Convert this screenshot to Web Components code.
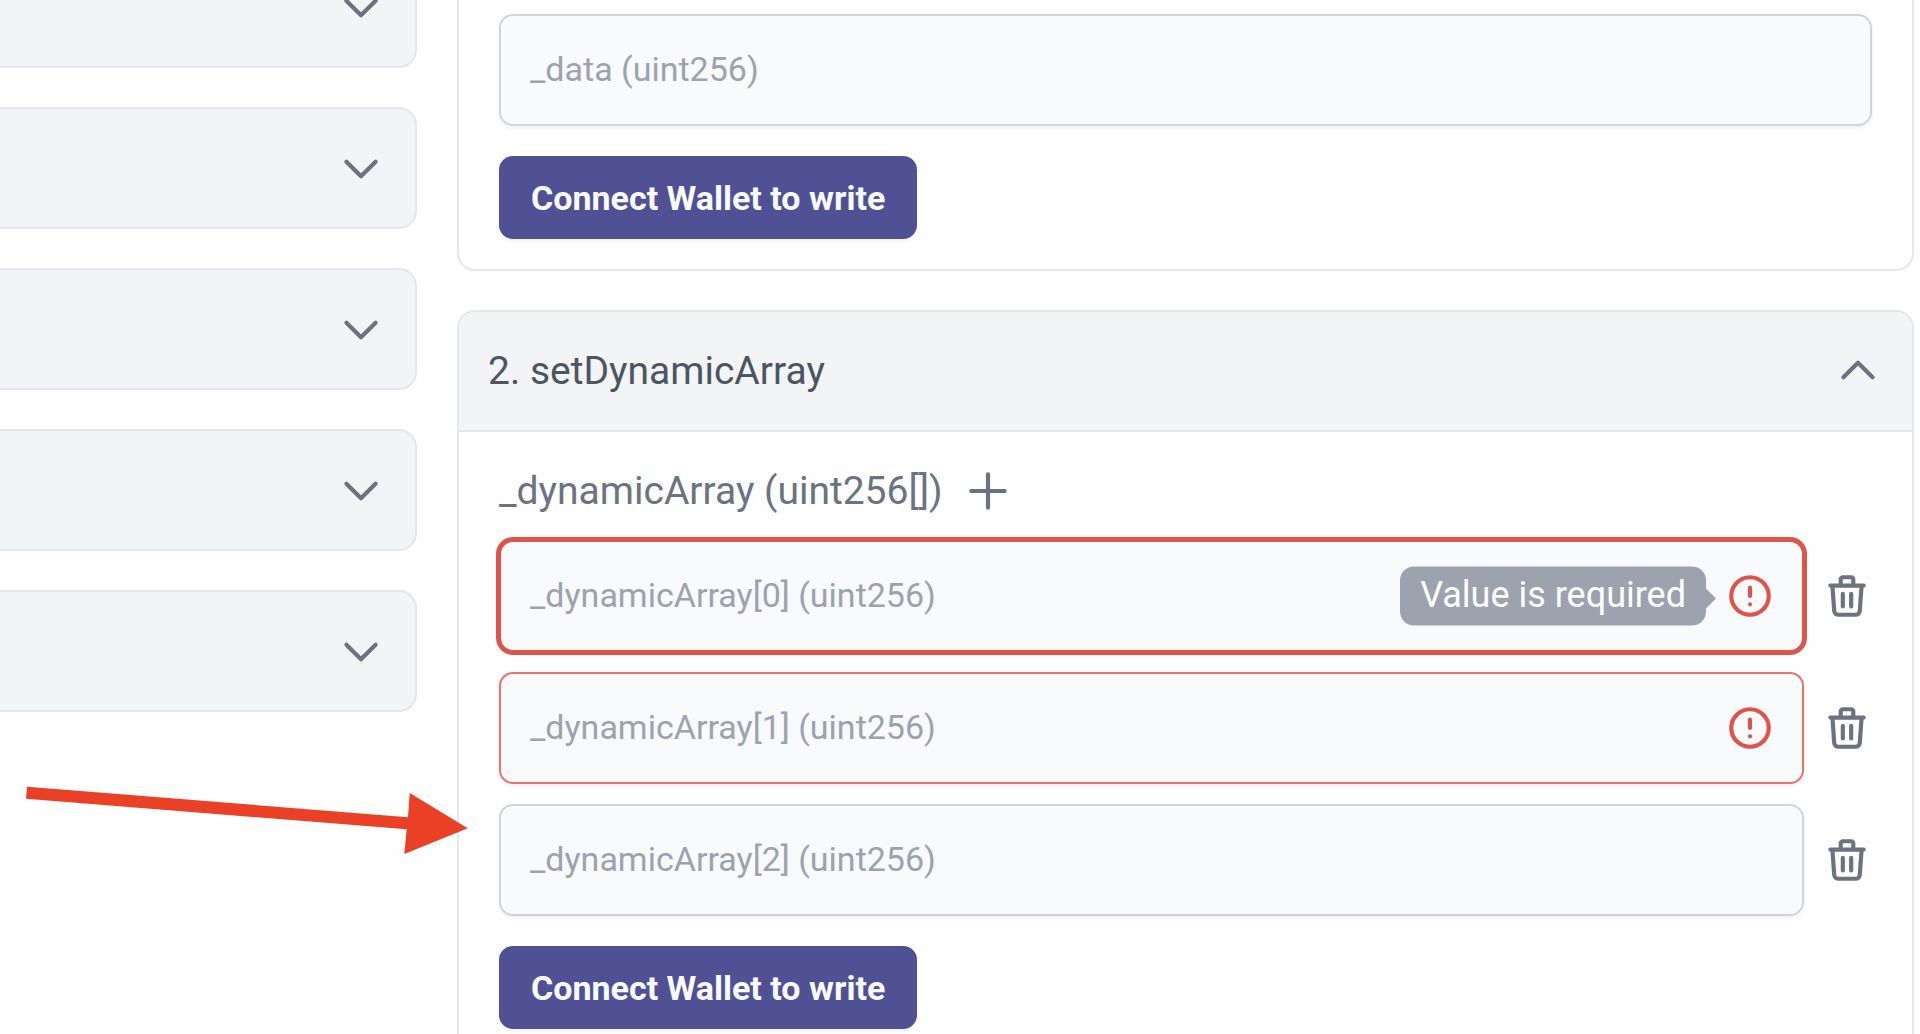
<!DOCTYPE html>
<html lang="en">
<head>
<meta charset="utf-8">
<title>Write contract</title>
<style>
  body {
    margin: 0;
    height: 100vh;
    overflow: hidden;
    background: #fefefe;
    font-family: Roboto, "Liberation Sans", sans-serif;
    --line: #e5e7eb;
    --panel: #f3f4f6;
    --field: #f9fafc;
    --field-line: #d1d5db;
    --muted: #9ca3af;
    --icon: #6b7280;
    --heading: #4b5563;
    --danger: #df534d;
    --danger-soft: #e8736f;
    --primary: #4f5194;
  }
</style>
</head>
<body>
<contract-page>
  <closed-panel slot="side" label="Read method 1"></closed-panel>
  <closed-panel slot="side" label="Read method 2"></closed-panel>
  <closed-panel slot="side" label="Read method 3"></closed-panel>
  <closed-panel slot="side" label="Read method 4"></closed-panel>
  <closed-panel slot="side" label="Read method 5"></closed-panel>

  <method-card>
    <value-field name="_data (uint256)"></value-field>
    <action-button slot="action">Connect Wallet to write</action-button>
  </method-card>
  <method-card heading="2. setDynamicArray">
    <array-label slot="label">_dynamicArray (uint256[])</array-label>
    <value-field name="_dynamicArray[0] (uint256)" removable invalid active message="Value is required"></value-field>
    <value-field name="_dynamicArray[1] (uint256)" removable invalid></value-field>
    <value-field name="_dynamicArray[2] (uint256)" removable></value-field>
    <action-button slot="action">Connect Wallet to write</action-button>
  </method-card>
  <pointer-arrow slot="note"></pointer-arrow>
</contract-page>

<script>
const PATHS = {
  down: 'M19 9l-7 7-7-7',
  up: 'M5 15l7-7 7 7',
  plus: 'M12 4v16m8-8H4',
  alert: 'M12 8v4m0 4h.01M21 12a9 9 0 11-18 0 9 9 0 0118 0z',
  trash: 'M19 7l-.867 12.142A2 2 0 0116.138 21H7.862a2 2 0 01-1.995-1.858L5 7m5 4v6m4-6v6m1-10V4a1 1 0 00-1-1h-4a1 1 0 00-1 1v3M4 7h16'
};

class BaseElement extends HTMLElement {
  connectedCallback() {
    if (this.shadowRoot) return;
    const root = this.attachShadow({ mode: 'open' });
    root.innerHTML = `<style>*{box-sizing:border-box}button{font:inherit;margin:0;padding:0;border:0;background:none;cursor:pointer}${this.styles()}</style>${this.markup()}`;
  }
}

customElements.define('line-icon', class extends BaseElement {
  styles() { return ':host{display:block;flex:none;width:50px;height:50px;color:var(--icon)}svg{display:block;width:100%;height:100%}'; }
  markup() {
    return `<svg viewBox="0 0 24 24" fill="none" stroke="currentColor" stroke-width="2" stroke-linecap="round" stroke-linejoin="round" aria-hidden="true"><path d="${PATHS[this.getAttribute('name')]}"/></svg>`;
  }
});

customElements.define('contract-page', class extends BaseElement {
  styles() {
    return `:host{display:grid;grid-template-columns:417px minmax(0,1fr);column-gap:40px;padding-right:6px;align-items:start}
    aside,main{display:flex;flex-direction:column;gap:39px}
    aside{margin-top:-54px}`;
  }
  markup() { return '<aside><slot name="side"></slot></aside><main><slot></slot></main><slot name="note"></slot>'; }
});

customElements.define('closed-panel', class extends BaseElement {
  styles() {
    return `:host{display:block}
    button{display:flex;align-items:center;justify-content:flex-end;width:100%;height:122px;padding:0 29px;
      background:var(--panel);border:2px solid var(--line);border-left:0;border-radius:0 18px 18px 0}`;
  }
  markup() { return `<button type="button" aria-expanded="false" aria-label="${this.getAttribute('label')}"><line-icon name="down"></line-icon></button>`; }
});

customElements.define('method-card', class extends BaseElement {
  styles() {
    return `:host{display:block;border:2px solid var(--line);border-radius:18px;overflow:hidden}
    :host(:not([heading])){border-top:0;border-radius:0 0 18px 18px}
    h2{margin:0;font-size:39px;line-height:50px;font-weight:400}
    h2 button{display:flex;align-items:center;justify-content:space-between;width:100%;height:120px;padding:0 29px;
      color:var(--heading);background:var(--panel);border-bottom:2px solid var(--line);text-align:left}
    .body{display:flex;flex-direction:column;padding:14px 40px 30px}
    :host([heading]) .body{padding-top:34px}
    .fields{display:flex;flex-direction:column;gap:20px;margin-bottom:30px}`;
  }
  markup() {
    const h = this.getAttribute('heading');
    return `${h ? `<h2><button type="button" aria-expanded="true"><span>${h}</span><line-icon name="up"></line-icon></button></h2>` : ''}
    <div class="body"><slot name="label"></slot><div class="fields"><slot></slot></div><slot name="action"></slot></div>`;
  }
});

customElements.define('array-label', class extends BaseElement {
  styles() { return ':host{display:flex;align-items:center;gap:20px;margin-bottom:24px;font-size:39px;line-height:50px;color:var(--icon)}'; }
  markup() { return '<span><slot></slot></span><button type="button" aria-label="Add item"><line-icon name="plus"></line-icon></button>'; }
});

customElements.define('value-field', class extends BaseElement {
  styles() {
    return `:host{display:flex;align-items:center;gap:18px}
    .box{display:flex;align-items:center;flex:1;min-width:0;height:112px;padding:0 27px 0 29px;background:var(--field);
      border:2px solid var(--field-line);border-radius:14px;box-shadow:0 2px 4px rgba(0,0,0,.06)}
    :host([invalid]) .box{border-color:var(--danger-soft)}
    :host([active]) .box{border-color:var(--danger);box-shadow:0 0 0 3px var(--danger)}
    input{flex:1;min-width:0;height:100%;padding:0 0 2px;border:0;outline:0;background:none;font:inherit;font-size:34px;color:var(--heading)}
    input::placeholder{color:var(--muted);opacity:1}
    .state{position:relative;flex:none}
    .state line-icon{color:var(--danger)}
    .tip{position:absolute;right:calc(100% + 19px);top:50%;transform:translateY(-50%);padding:8px 20px 10px;border-radius:14px;
      background:var(--muted);color:#fff;font-size:36px;line-height:41px;white-space:nowrap}
    .tip::after{content:"";position:absolute;left:100%;top:50%;margin-top:-8px;border:10px solid transparent;border-left-color:var(--muted);border-right:0}`;
  }
  markup() {
    const n = this.getAttribute('name'), m = this.getAttribute('message');
    return `<div class="box"><input type="text" placeholder="${n}" aria-label="${n}">
    ${this.hasAttribute('invalid') ? `<div class="state"><line-icon name="alert"></line-icon>${m ? `<div class="tip" role="tooltip">${m}</div>` : ''}</div>` : ''}</div>
    ${this.hasAttribute('removable') ? `<button type="button" aria-label="Remove ${n}"><line-icon name="trash"></line-icon></button>` : ''}`;
  }
});

customElements.define('action-button', class extends BaseElement {
  styles() {
    return `:host{display:block;align-self:flex-start}
    button{display:block;height:83px;padding:0 32px;border-radius:14px;background:var(--primary);color:#f9fafb;
      font-size:34px;font-weight:700;box-shadow:0 2px 4px rgba(0,0,0,.06)}`;
  }
  markup() { return '<button type="button"><slot></slot></button>'; }
});

customElements.define('pointer-arrow', class extends BaseElement {
  styles() { return ':host{position:absolute;left:26px;top:786px;width:442px;height:68px;pointer-events:none}svg{display:block}'; }
  markup() { return '<svg width="442" height="68" viewBox="0 0 442 68" aria-hidden="true"><path fill="#ea4025" d="M1 .7L382 31.3 383.7 7 441.7 42.3 378.3 68 380.7 43.3 0 12.7z"/></svg>'; }
});
</script>
</body>
</html>
